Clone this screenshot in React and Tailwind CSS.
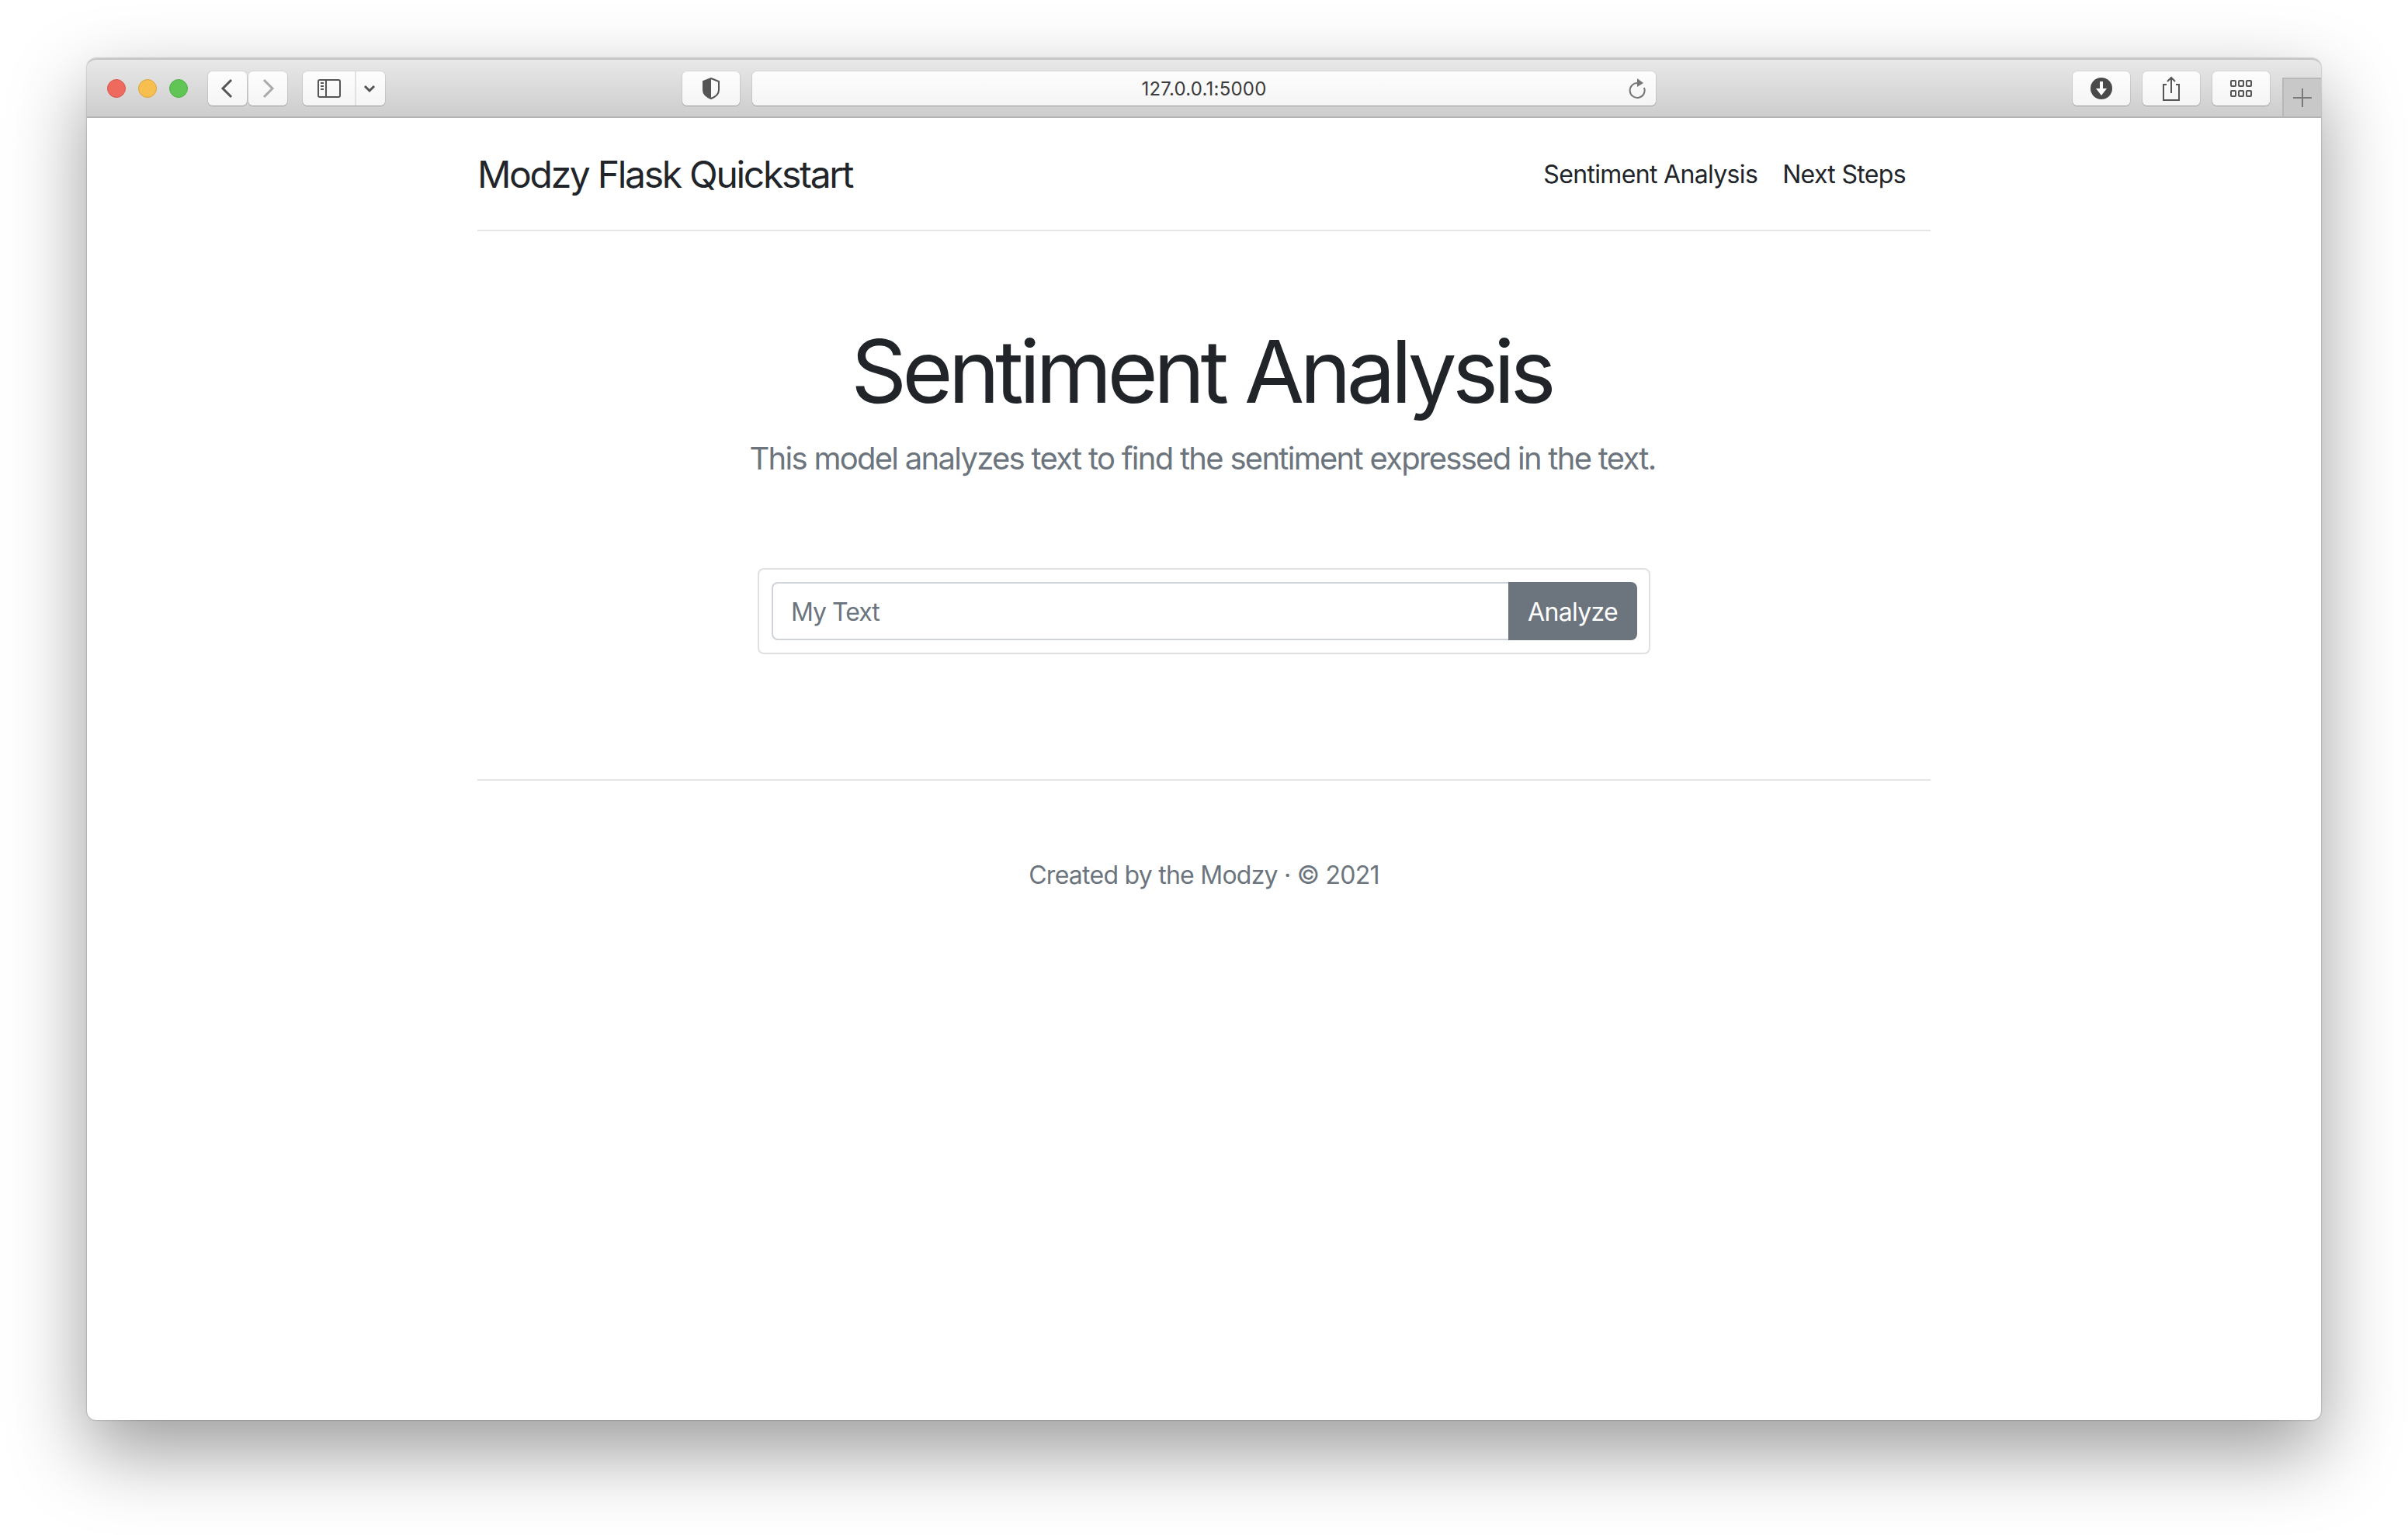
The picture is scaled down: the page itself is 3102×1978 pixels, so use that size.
const btn = "flex items-center justify-center h-[44px] rounded-[6px] bg-gradient-to-b from-[#fdfdfd] to-[#f5f5f5] shadow-[0_0_0_1px_rgba(0,0,0,0.06),0_1px_1px_rgba(0,0,0,0.22)]";

function Light({ className }) {
  return <span className={`h-[24px] w-[24px] rounded-full border ${className}`} />;
}

function Toolbar() {
  return (
    <div className="flex h-[77px] shrink-0 items-center rounded-t-[12px] border-t-2 border-b-2 border-t-[#c4c4c4] border-b-[#b4b4b4] bg-gradient-to-b from-[#e8e8e8] to-[#cdcdcd] pl-[26px]">
      <div className="flex gap-[16px]">
        <Light className="border-[#d9564c] bg-[#ee6a5f]" />
        <Light className="border-[#dca43c] bg-[#f6bf4f]" />
        <Light className="border-[#50ae46] bg-[#61c555]" />
      </div>
      <div className="ml-[26px] flex gap-[2px]">
        <div className={`${btn} w-[50px]`}>
          <svg width="20" height="28" viewBox="0 0 20 28" fill="none" stroke="#555" strokeWidth="3">
            <path d="M15 3 L4 14 L15 25" />
          </svg>
        </div>
        <div className={`${btn} w-[50px]`}>
          <svg width="20" height="28" viewBox="0 0 20 28" fill="none" stroke="#aaa" strokeWidth="3">
            <path d="M5 3 L16 14 L5 25" />
          </svg>
        </div>
      </div>
      <div className={`${btn} ml-[20px] w-[106px]`}>
        <div className="flex h-full w-[69px] items-center justify-center border-r-2 border-[#e2e2e2]">
          <svg width="30" height="24" viewBox="0 0 30 24" fill="none" stroke="#555" strokeWidth="2">
            <rect x="1" y="1" width="28" height="22" rx="2" />
            <path d="M11 1 V23" />
            <path d="M4 5 H8 M4 9 H8 M4 13 H8" />
          </svg>
        </div>
        <div className="flex flex-1 items-center justify-center pr-[4px]">
          <svg width="16" height="12" viewBox="0 0 16 12" fill="none" stroke="#555" strokeWidth="3">
            <path d="M2 3 L8 9 L14 3" />
          </svg>
        </div>
      </div>
      <div className={`${btn} ml-[383px] w-[74px]`}>
        <svg width="24" height="28" viewBox="0 0 24 28">
          <path d="M12 1 L22 5 V16 C22 21 17 25 12 27 C7 25 2 21 2 16 V5 Z" fill="none" stroke="#555" strokeWidth="2" />
          <path d="M12 1 L2 5 V16 C2 21 7 25 12 27 Z" fill="#555" />
        </svg>
      </div>
      <div className={`${btn} relative ml-[16px] w-[1164px]`}>
        <span className="pt-[2px] text-[24px] tracking-[0.2px] text-[#3c3c3c]">127.0.0.1:5000</span>
        <svg className="absolute right-[12px] top-[9px]" width="24" height="28" viewBox="0 0 24 28" fill="none">
          <path d="M13 6 A9.5 9.5 0 1 0 21 12" stroke="#777" strokeWidth="2" />
          <path d="M12 0 L20 6 L12 11 Z" fill="#777" />
        </svg>
      </div>
      <div className={`${btn} ml-[537px] w-[74px]`}>
        <svg width="28" height="28" viewBox="0 0 28 28">
          <circle cx="14" cy="14" r="14" fill="#4a4a4a" />
          <path d="M12 5 H16 V14 H21 L14 23 L7 14 H12 Z" fill="#fff" />
        </svg>
      </div>
      <div className={`${btn} ml-[16px] w-[74px]`}>
        <svg width="24" height="32" viewBox="0 0 24 32" fill="none" stroke="#555" strokeWidth="2">
          <path d="M6 11 H2 V31 H22 V11 H18" />
          <path d="M12 22 V2 M7 7 L12 2 L17 7" />
        </svg>
      </div>
      <div className={`${btn} ml-[16px] w-[74px]`}>
        <svg width="28" height="22" viewBox="0 0 28 22" fill="none" stroke="#555" strokeWidth="2">
          <rect x="1" y="1" width="6" height="7" rx="1" />
          <rect x="11" y="1" width="6" height="7" rx="1" />
          <rect x="21" y="1" width="6" height="7" rx="1" />
          <rect x="1" y="14" width="6" height="7" rx="1" />
          <rect x="11" y="14" width="6" height="7" rx="1" />
          <rect x="21" y="14" width="6" height="7" rx="1" />
        </svg>
      </div>
      <div className="ml-[16px] flex h-[50px] w-[50px] items-center justify-center self-end border-t-2 border-l-2 border-[#b8b8b8] bg-[#c8c8c8]">
        <svg width="24" height="24" viewBox="0 0 24 24" stroke="#7a7a7a" strokeWidth="2">
          <path d="M12 0 V24 M0 12 H24" />
        </svg>
      </div>
    </div>
  );
}

export default function App() {
  return (
    <div className="h-[1978px] overflow-hidden bg-white pl-[112px] pt-[75px] font-['Inter',sans-serif]">
      <div className="flex h-[1755px] w-[2878px] flex-col rounded-[12px] bg-white shadow-[0_40px_100px_rgba(0,0,0,0.4),0_0_2px_rgba(0,0,0,0.45)]">
        <Toolbar />
        <main className="mx-auto w-[1872px]">
          <header className="flex h-[146px] items-center justify-between border-b-2 border-[#e5e5e5] pr-[32px]">
            <h5 className="pt-[2px] text-[48px] tracking-[-2.3px] text-[#212529]">Modzy Flask Quickstart</h5>
            <nav className="flex gap-[32px] pt-[2px] text-[32px] tracking-[-0.66px] text-[#212529]">
              <a>Sentiment Analysis</a>
              <a>Next Steps</a>
            </nav>
          </header>

          <section className="pt-[113px] text-center">
            <h1 className="pr-[7px] text-[112px] leading-[134px] tracking-[-5.8px] text-[#212529]">Sentiment Analysis</h1>
            <p className="mt-[16px] pr-[4px] text-[40px] leading-[60px] tracking-[-1.72px] text-[#6c757d]">
              This model analyzes text to find the sentiment expressed in the text.
            </p>
          </section>

          <form className="mx-auto mt-[111px] flex h-[111px] w-[1150px] rounded-[8px] border-2 border-[#e0e0e0] p-[16px] pr-[15px]">
            <input
              className="min-w-0 flex-1 rounded-l-[8px] border-2 border-r-0 border-[#ced4da] pl-[23px] pr-[24px] pt-[2px] text-[32px] tracking-[-1px] text-[#495057] placeholder:text-[#6c757d]"
              placeholder="My Text"
            />
            <button className="w-[166px] rounded-r-[8px] bg-[#6c757d] pt-[2px] text-[32px] tracking-[-0.7px] text-white">Analyze</button>
          </form>

          <footer className="mt-[161px] border-t-2 border-[#e5e5e5] pt-[98px] text-center text-[32px] leading-[48px] tracking-[-0.75px] text-[#6c757d]">
            Created by the Modzy · © 2021
          </footer>
        </main>
      </div>
    </div>
  );
}
